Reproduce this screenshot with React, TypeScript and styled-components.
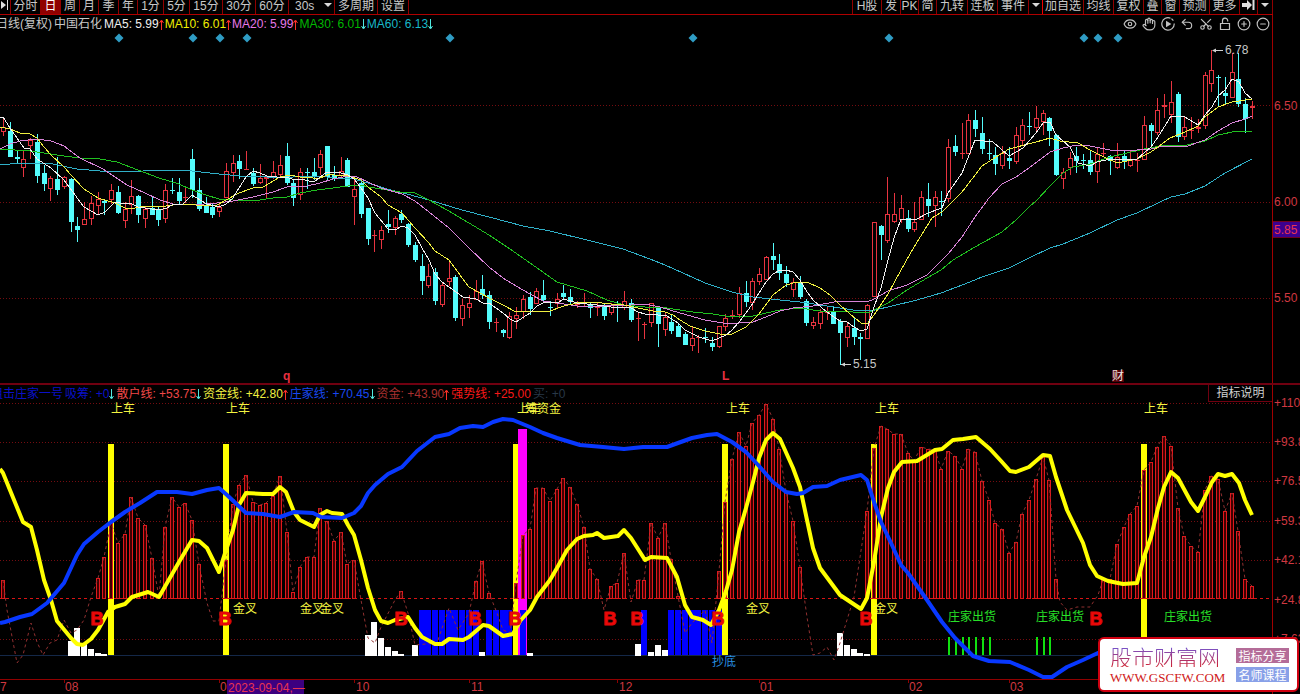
import React from "react";
import styled, { createGlobalStyle } from "styled-components";
import { Eye, Hand, Undo2, Scissors, CirclePlus, CircleMinus } from "lucide-react";

const GlobalStyle = createGlobalStyle`
  * { box-sizing: border-box; }
  body {
    margin: 0;
    background: #000;
    color: #c8c8c8;
    font: 12px/12px "Liberation Sans", "Noto Sans CJK SC", sans-serif;
    overflow-x: hidden;
  }
`;

const Page = styled.main`
  background: #000;
  width: 100%;
`;

const Toolbar = styled.nav`
  display: flex;
  justify-content: space-between;
  height: 15px;
  margin-right: 27px;
  border-bottom: 1px solid #b00000;
`;

const ToolGroup = styled.div`
  display: flex;
`;

const ToolButton = styled.button<{ $w: number; $active?: boolean; $strong?: boolean }>`
  width: ${(p) => p.$w}px;
  height: 14px;
  padding: 0;
  border: 0;
  border-right: 1px solid ${(p) => (p.$strong ? "#f00000" : "#900000")};
  background: ${(p) => (p.$active ? "#900000" : "transparent")};
  color: ${(p) => (p.$active ? "#ffffff" : "#c8c8c8")};
  font: inherit;
  line-height: 12px;
  display: flex;
  justify-content: center;
  align-items: flex-start;
  white-space: nowrap;
`;

const PeriodField = styled.label`
  position: relative;
  display: flex;
  width: 46px;
  height: 14px;
  border-right: 1px solid #900000;

  svg {
    position: absolute;
    right: 2px;
    top: 3px;
    pointer-events: none;
  }
`;

const PeriodSelect = styled.select`
  appearance: none;
  width: 100%;
  height: 12px;
  padding: 0 0 0 6px;
  border: 0;
  background: transparent;
  color: #c8c8c8;
  font: inherit;
  line-height: 12px;
`;

const Header = styled.header<{ $h: number }>`
  display: flex;
  justify-content: space-between;
  align-items: center;
  height: ${(p) => p.$h}px;
  margin-right: 27px;
  border-right: 1px solid #a00000;
`;

const Readouts = styled.div<{ $shift: number }>`
  display: flex;
  gap: 2px;
  margin-left: -${(p) => p.$shift}px;
  white-space: nowrap;
`;

const Readout = styled.span<{ $c: string }>`
  color: ${(p) => p.$c};
`;

const MaGroup = styled.div`
  display: flex;
  gap: 1px;
`;

const Arrow = styled.svg`
  display: inline-block;
  vertical-align: -2px;
`;

const IconBar = styled.div`
  display: flex;
  gap: 5px;
  padding-right: 2px;
`;

const IconButton = styled.button`
  display: flex;
  width: 14px;
  height: 14px;
  padding: 0;
  border: 0;
  background: transparent;
  color: #c0c0c0;
`;

const Chart = styled.svg`
  display: block;
  width: 100%;
  height: auto;
  overflow: visible;
`;

const SubPanel = styled.section`
  border-top: 2px solid #700010;
`;

const NoteButton = styled.button`
  width: 64px;
  height: 17px;
  padding: 0;
  border: 1px solid #700010;
  border-top: 0;
  border-right: 0;
  background: #000;
  color: #d0d0d0;
  font: inherit;
`;

const Brand = styled.aside`
  position: absolute;
  right: 1px;
  top: 637px;
  display: flex;
  align-items: center;
  justify-content: space-between;
  width: 201px;
  height: 55px;
  padding: 0 8px 0 10px;
  border: 2px solid #d00010;
  border-radius: 6px;
  background: #fff;
`;

const BrandText = styled.div`
  display: flex;
  flex-direction: column;
  gap: 4px;
`;

const BrandName = styled.strong`
  font: 300 22px/22px "Noto Sans CJK SC", sans-serif;
  background: linear-gradient(#6a5ae0, #d02030);
  background-clip: text;
  -webkit-background-clip: text;
  color: transparent;
  white-space: nowrap;
`;

const BrandUrl = styled.a`
  font: 13px/14px "Liberation Serif", serif;
  color: #d02020;
  text-decoration: none;
`;

const BrandTags = styled.div`
  display: flex;
  flex-direction: column;
  gap: 4px;
`;

const BrandTag = styled.span<{ $bg: string }>`
  background: ${(p) => p.$bg};
  color: #fff;
  font: 12px/15px "Noto Sans CJK SC", sans-serif;
  height: 15px;
  width: 53px;
  text-align: center;
  white-space: nowrap;
`;

const xAt = (i: number) => Math.round(3 + 6.75 * i);

/* wick top, body top, body bottom, wick bottom; rising candles carry "u", falling "d" */
const CANDLES = `
u117,127,131,136 d122,131,157,157 d150,157,159,163 u150,159,167,177 u138,140,145,159 d134,142,176,183 d165,173,184,191
u176,178,188,201 d157,179,190,195 u176,177,186,189 d178,179,222,232 d217,226,230,242 u202,219,224,224 u196,203,218,225
u192,199,205,215 d200,201,203,215 u184,190,199,204 d186,192,213,214 u202,209,220,228 u180,196,204,214 d195,196,215,223
u207,209,218,228 d197,208,215,215 d207,210,220,226 u184,190,218,223 d178,190,191,194 d178,192,201,204 u187,197,198,203
d149,159,190,198 d178,190,209,211 d197,206,213,213 d203,207,215,218 u204,207,211,217 u163,171,197,198 u155,163,172,182
d155,161,169,179 u151,169,170,170 d168,173,184,186 u164,178,182,184 u175,177,179,199 u161,172,177,179 u155,165,174,177
d143,156,183,185 d180,183,198,206 u168,172,194,200 d168,172,173,189 d158,172,177,180 u150,154,167,175 d146,146,177,180
d166,175,179,181 u157,171,175,177 d158,160,187,187 u180,189,196,225 d182,183,214,218 d208,208,239,245 u230,235,236,252
u226,230,239,249 d210,224,227,233 u216,218,227,235 d210,214,220,223 d223,224,245,247 d242,245,260,262 d254,266,281,295
u264,276,285,288 d268,272,301,305 u283,285,304,307 u262,278,281,286 d275,277,318,321 u299,305,318,326 u295,303,307,318
u280,291,299,299 d275,289,295,299 d291,295,322,329 u318,322,323,332 d329,330,333,337 u312,316,337,339 u307,315,318,329
u295,299,311,319 d292,297,309,315 u288,291,303,304 d280,295,300,301 d301,307,308,316 u293,299,303,308 d285,293,297,300
d289,297,302,304 u301,303,305,308 u293,302,304,307 d302,305,308,318 u302,307,308,316 d303,305,316,320 u303,305,312,315
d301,307,308,322 u291,301,307,310 d299,303,320,322 u313,318,319,341 u322,324,325,339 u303,303,322,327 d306,307,324,347
u313,317,329,336 d315,322,331,334 d323,326,337,337 d332,334,345,345 u327,338,345,351 u335,337,338,353 d328,337,338,343
d337,343,347,351 u326,326,346,348 u314,318,326,331 u310,315,316,319 u287,293,314,318 d281,293,302,307 u278,281,302,310
u268,274,281,285 u256,257,279,280 d243,256,260,270 d254,264,273,280 d266,274,283,287 u278,282,289,297 d276,283,297,299
d299,301,323,326 u317,322,325,329 u309,312,323,329 u306,312,313,320 d307,312,324,324 d319,321,333,365 u322,326,337,347
d318,328,337,345 d333,337,339,360 u304,305,338,339 u222,222,296,297 d225,226,235,260 u177,214,240,243 u193,214,221,223
u195,208,219,223 d210,218,229,232 u202,222,229,232 u191,197,219,220 d183,199,206,217 u191,197,205,227 d191,201,202,216
u139,147,198,202 d135,146,152,156 u123,153,154,159 u114,120,153,154 d110,120,129,137 d117,133,149,154 d139,153,154,160
d147,155,164,175 u146,153,165,169 d147,158,161,169 u127,135,161,164 u119,125,140,145 d112,126,127,135 u106,118,127,133
u110,113,121,135 d117,118,131,146 d134,135,175,176 u168,172,178,189 u152,158,167,175 d147,156,161,173 d154,160,161,169
d151,160,172,175 u147,154,171,183 u143,153,154,156 d155,156,161,175 u143,157,167,169 d150,156,161,169 u151,160,165,167
u153,160,161,172 u116,125,159,160 d123,125,131,147 u98,110,132,135 u94,105,107,118 u81,102,114,123 d92,94,137,142
u117,127,136,140 u117,130,131,139 u119,127,129,133 u72,75,125,129 u50,70,83,92 d75,77,78,107 d77,93,96,104
u53,72,97,98 d53,79,104,107 d98,104,119,133 u101,106,108,119`
  .trim()
  .split(/\s+/)
  .map((s) => ({ up: s[0] === "u", v: s.slice(1).split(",").map(Number) }));

const AVERAGES = [
  {
    color: "#30b0c8",
    points:
      "0,165 20,163 37,163 53,164 77,169 100,171 127,172 160,170 192,171 219,174 240,176 267,177 293,177 320,176 340,179 350,178 368,183 387,189 407,194 429,200 462,210 489,217 523,226 550,231 587,240 623,249 650,259 665,265 683,273 705,283 732,292 753,297 780,300 800,302 827,306 853,310 870,311 888,307 917,300 941,293 970,282 982,277 1009,268 1029,258 1050,248 1063,244 1090,233 1117,220 1137,213 1160,202 1171,197 1185,194 1205,186 1225,173 1252,159",
  },
  {
    color: "#20c020",
    points:
      "0,149 30,151 44,153 64,156 80,158 100,159 117,162 138,170 159,178 179,184 192,190 206,195 219,199 233,200 260,200 273,198 287,197 300,193 317,190 333,188 348,186 361,185 368,187 381,189 400,192 415,193 429,200 447,210 469,223 489,235 510,249 530,263 557,282 587,291 607,300 624,305 645,307 660,307 673,309 693,312 713,314 732,317 753,316 766,313 780,310 800,308 820,311 840,311 853,312 870,312 888,303 907,290 927,278 941,270 953,260 975,247 1002,232 1016,220 1029,207 1037,200 1050,186 1063,173 1073,167 1090,164 1110,157 1127,153 1144,149 1167,145 1187,145 1205,141 1218,135 1237,131 1252,132",
  },
  {
    color: "#d884d8",
    points:
      "0,149 10,144 20,141 37,139 51,141 64,146 80,158 103,169 127,185 145,193 160,200 173,204 192,205 217,203 233,201 253,197 273,192 287,187 307,186 320,183 333,179 348,176 357,177 368,182 381,188 402,194 415,201 429,212 449,228 469,248 489,267 503,278 516,286 530,294 543,301 564,304 577,306 597,307 610,305 631,305 645,304 660,307 680,313 705,320 723,323 739,323 753,322 766,317 780,311 793,308 813,306 834,302 847,301 867,302 874,299 888,291 907,285 927,275 935,267 948,254 962,237 975,217 989,198 1002,184 1016,177 1029,168 1050,152 1063,148 1077,145 1090,146 1110,150 1137,150 1151,149 1163,146 1185,147 1205,140 1218,131 1232,123 1245,119 1252,116",
  },
  {
    color: "#f0f040",
    points:
      "0,127 10,129 20,133 30,134 37,138 44,147 51,155 64,167 71,175 84,189 98,198 115,203 125,208 135,208 145,206 160,207 179,204 192,204 200,206 217,205 226,200 239,193 253,188 263,187 280,177 290,175 300,177 313,178 320,178 330,174 334,175 348,176 361,180 368,187 381,197 388,205 402,213 415,228 429,243 435,251 449,260 460,275 469,287 480,293 489,298 503,305 516,312 530,311 550,311 564,306 577,303 593,302 611,304 624,305 638,308 653,311 665,312 673,315 680,320 690,326 705,331 720,334 732,334 746,327 759,314 773,295 786,285 797,282 807,282 820,288 830,295 840,305 850,314 861,323 868,323 874,315 888,294 901,270 914,247 932,218 942,212 962,192 982,166 996,157 1009,149 1036,142 1050,138 1060,141 1078,143 1090,150 1104,157 1117,163 1137,159 1151,152 1170,138 1185,132 1198,126 1205,117 1218,107 1232,102 1252,99",
  },
  {
    color: "#f0f0f0",
    points:
      "0,117 3,117 10,128 24,148 30,149 37,159 51,168 64,180 78,199 84,207 98,215 105,212 115,202 120,203 132,204 138,207 159,210 167,208 172,205 183,204 192,195 200,200 207,204 219,207 226,204 233,198 239,188 246,177 253,171 260,173 267,176 277,177 287,177 294,180 300,179 314,182 320,177 327,172 334,172 341,173 348,175 354,179 361,188 368,198 375,213 388,229 395,230 402,226 408,228 415,235 422,248 429,260 435,274 442,282 456,292 463,297 476,299 483,303 489,303 503,313 510,319 516,322 530,313 537,306 543,303 550,302 557,303 564,299 577,303 597,305 611,307 624,307 631,308 638,312 645,314 658,315 667,316 678,323 685,330 699,337 712,341 726,335 732,330 739,322 746,313 753,303 759,293 766,282 773,274 780,270 786,270 793,272 800,280 807,292 813,300 822,308 827,312 834,317 840,321 847,322 854,327 861,331 867,329 874,307 881,288 888,260 894,238 901,219 915,220 928,213 942,208 948,193 962,173 975,140 993,142 1009,156 1023,148 1036,133 1043,123 1050,122 1056,135 1070,147 1078,163 1090,166 1097,162 1110,159 1137,159 1151,147 1158,137 1171,116 1185,117 1198,125 1205,115 1212,107 1218,96 1225,90 1232,79 1239,82 1245,93 1252,99",
  },
];

const DIAMONDS = [119, 193, 220, 247, 450, 693, 889, 1084, 1098, 1118];

/* runs of consecutive bars: first index, then the top of every bar */
const BAR_RUNS: [number, number[]][] = [
  [0, [580]],
  [14, [578, 557, 523, 543, 534, 497, 518, 525, 558]],
  [24, [527, 497, 507, 503, 520, 564]],
  [33, [560, 504, 485, 475, 502, 505, 503, 496, 476, 532, 592, 567, 557, 557, 508, 521, 541, 532, 564, 560]],
  [59, [591]],
  [70, [581, 561, 593]],
  [76, [583, 535, 529, 488, 488, 501, 489, 478, 487, 504, 527, 569, 579]],
  [90, [586, 583, 553]],
  [94, [580, 580, 523, 538, 523, 559, 596]],
  [106, [571, 502, 459, 432, 446, 423, 415, 404, 419, 449, 491, 521, 567]],
  [128, [511, 448, 426, 429, 434, 434, 453, 461, 447, 449, 450, 469, 451, 456, 469, 449, 452, 481, 500, 523, 529, 553, 542, 514, 500, 479, 457, 480, 579]],
  [163, [580, 579, 544, 527, 514, 506, 470, 462, 447, 436, 446, 508, 536, 546, 552, 490, 476, 479, 511, 493, 531, 579, 586]],
];

/* dips of the retail line between two runs of bars */
const DIPS: string[] = [
  "7,610 17,663 23,655 31,623 37,642 43,655 50,643 57,640 64,620 71,633 77,630 84,620 91,597",
  "159,597",
  "207,603 213,621 219,621",
  "361,600 368,638 375,643 381,627 395,600",
  "408,613 415,645 437,643 449,608 458,630 469,613",
  "497,613 503,630 510,633",
  "604,610",
  "631,602",
  "685,633 692,623 705,610 712,643",
  "807,617 813,655 820,653 827,647 834,660 840,643 854,597",
  "1060,602 1067,610 1077,607 1090,607 1098,595",
];

const RETAIL_LINE = BAR_RUNS.map(
  ([start, tops], r) => tops.map((t, k) => `${xAt(start + k)},${t}`).join(" ") + " " + (DIPS[r] ?? "")
).join(" ");

const WHITE_BARS: [number, number][] = [
  [10, 641], [11, 628], [12, 643], [13, 649], [14, 653], [15, 654],
  [54, 635], [55, 622], [56, 638], [57, 647], [58, 651], [59, 654], [61, 645],
  [71, 652], [78, 653], [94, 644], [96, 652], [97, 645], [98, 650],
  [124, 633], [125, 645], [126, 649], [127, 653], [128, 654],
];

const BLUE_BARS = [62, 63, 64, 65, 66, 67, 68, 69, 70, 72, 73, 74, 75, 77, 95, 99, 100, 101, 102, 103, 104, 105, 106];

const PILLARS = [16, 33, 76, 107, 129, 169];
const GREEN_STICKS = [140, 141, 142, 143, 144, 145, 146, 153, 154, 155];

const FUND_LINE =
  "0,469 3,473 23,522 31,527 37,550 44,580 51,600 57,621 71,638 77,644 83,645 91,639 98,630 108,612 115,607 125,604 132,597 148,592 159,597 167,583 179,562 192,540 199,541 207,548 219,572 226,550 233,530 239,505 246,493 263,494 273,494 280,487 286,492 294,512 300,520 314,527 320,515 327,511 332,513 342,514 348,525 354,535 361,560 368,588 375,610 381,621 388,623 395,620 408,617 415,628 422,637 435,644 442,644 449,639 463,640 469,637 483,625 489,626 503,636 513,634 520,621 530,610 537,597 550,580 557,568 567,550 577,539 584,536 593,535 597,533 604,538 618,536 624,530 631,538 645,560 651,557 667,558 677,577 685,605 692,617 703,620 711,625 719,610 726,591 732,570 739,532 746,508 753,482 759,458 766,440 773,433 780,439 793,468 800,487 807,520 813,548 820,568 840,595 861,609 867,598 874,562 881,517 888,488 894,472 902,462 917,461 935,450 942,449 953,440 963,439 976,437 990,449 1002,462 1010,471 1016,472 1029,467 1043,455 1050,456 1056,477 1067,510 1083,543 1090,565 1097,576 1108,581 1123,584 1137,583 1144,557 1151,537 1158,508 1164,487 1171,472 1178,478 1191,502 1198,511 1205,497 1212,482 1218,474 1225,476 1232,474 1239,483 1245,500 1252,515";

const BANKER_LINE =
  "0,623 5,622 20,617 32,614 47,603 64,583 77,555 84,544 98,532 111,522 125,512 140,503 157,492 177,492 192,494 207,490 219,488 227,495 246,513 263,514 280,517 294,512 313,513 321,517 342,518 354,513 361,506 368,493 375,485 388,474 402,467 417,451 435,437 449,434 460,428 473,426 483,427 493,422 503,419 513,420 530,427 543,433 557,438 580,445 603,447 624,449 643,447 667,447 678,443 692,438 707,435 717,434 732,442 746,452 759,466 773,482 786,492 797,494 803,493 813,487 827,486 840,480 861,475 867,480 874,502 881,522 891,543 901,565 908,573 927,600 942,622 955,638 973,656 989,661 1010,662 1029,670 1043,677 1052,677 1067,667 1083,660 1100,652";

const YELLOW_NOTES: [number, number, string][] = [
  [111, 413, "上车"], [226, 413, "上车"], [517, 413, "上车"], [525, 413, "筹资金"], [726, 413, "上车"], [875, 413, "上车"], [1144, 413, "上车"],
  [233, 613, "金叉"], [300, 613, "金叉"], [320, 613, "金叉"], [746, 613, "金叉"], [874, 613, "金叉"],
];

const GREEN_NOTES = [948, 1036, 1164];
const BUY_MARKS = [97, 225, 401, 475, 515, 610, 637, 718, 866, 1096];

const LEVELS: [number, string][] = [
  [403, "+110"], [442, "+93.8"], [481, "+76.5"], [521, "+59.3"], [560, "+42.1"], [600, "+24.8"], [639, "+7.63"],
];

const MONTHS: [number, number, string][] = [
  [-10, 0, "7"], [64, 65, "08"], [219, 220, "09"], [354, 356, "10"], [469, 471, "11"], [617, 619, "12"],
  [759, 760, "01"], [908, 909, "02"], [1009, 1010, "03"],
];

const PERIODS: [string, number][] = [
  ["周", 19], ["月", 19], ["季", 20], ["年", 19], ["1分", 26], ["5分", 26], ["15分", 33], ["30分", 33], ["60分", 33],
];

const ACTIONS_A: [string, number][] = [
  ["H股", 29], ["发", 19], ["PK", 18], ["简", 18], ["九转", 31], ["连板", 30], ["事件", 31],
];

const ACTIONS_B: [string, number][] = [
  ["加自选", 41], ["均线", 30], ["复权", 30], ["叠", 18], ["窗", 18], ["预测", 30], ["更多", 30],
];

const Caret = () => (
  <svg width="8" height="5" viewBox="0 0 8 5" aria-hidden="true">
    <path d="M0 0H8L4 4Z" fill="#d8d8d8" />
  </svg>
);

const CaretButton = ({ w, label, strong }: { w: number; label: string; strong?: boolean }) => (
  <ToolButton $w={w} $strong={strong} aria-label={label}>
    <svg width="8" height="8" viewBox="0 0 8 8" aria-hidden="true">
      <path d="M0 3H8L4 7Z" fill="#d8d8d8" />
    </svg>
  </ToolButton>
);

const Trend = ({ up }: { up?: boolean }) => (
  <Arrow width="5" height="11" viewBox="0 0 5 11" aria-hidden="true">
    {up ? (
      <path d="M2.5 11V2M.5 4L2.5 1L4.5 4" stroke="#ff3028" fill="none" />
    ) : (
      <path d="M2.5 0V9M.5 7L2.5 10L4.5 7" stroke="#50e8e0" fill="none" />
    )}
  </Arrow>
);

const TopToolbar = () => (
  <Toolbar aria-label="周期">
    <ToolGroup>
      <ToolButton $w={11} aria-label="上一个">
        <svg width="9" height="11" viewBox="0 0 9 11" aria-hidden="true">
          <path d="M0 1L5 5L0 9Z" fill="#e0e0e0" />
          <path d="M6.5 0V10" stroke="#e0e0e0" />
        </svg>
      </ToolButton>
      <ToolButton $w={30}>分时</ToolButton>
      <ToolButton $w={20} $active>日</ToolButton>
      {PERIODS.map(([t, w]) => (
        <ToolButton key={t} $w={w}>{t}</ToolButton>
      ))}
      <PeriodField>
        <PeriodSelect aria-label="秒周期" defaultValue="30s">
          <option>30s</option>
        </PeriodSelect>
        <Caret />
      </PeriodField>
      <ToolButton $w={43}>多周期</ToolButton>
      <ToolButton $w={31}>设置</ToolButton>
    </ToolGroup>
    <ToolGroup>
      <ToolButton $w={1} aria-hidden="true" tabIndex={-1} />
      {ACTIONS_A.map(([t, w]) => (
        <ToolButton key={t} $w={w}>{t}</ToolButton>
      ))}
      <CaretButton w={14} label="更多事件" strong />
      {ACTIONS_B.map(([t, w]) => (
        <ToolButton key={t} $w={w}>{t}</ToolButton>
      ))}
      <ToolButton $w={18} aria-label="下一个">
        <svg width="13" height="11" viewBox="0 0 13 11" aria-hidden="true">
          <path d="M0 3H5V0L10 5L5 10V7H0Z" fill="#e0e0e0" />
          <path d="M11.5 0V10" stroke="#e0e0e0" strokeWidth="2" />
        </svg>
      </ToolButton>
      <CaretButton w={15} label="展开" />
    </ToolGroup>
  </Toolbar>
);

const PriceHeader = () => (
  <Header $h={18}>
    <Readouts $shift={4}>
      <Readout $c="#c8c8c8">日线(复权)</Readout>
      <Readout $c="#c8c8c8">中国石化</Readout>
      <MaGroup>
        <Readout $c="#f0f0f0">MA5: 5.99<Trend up /></Readout>
        <Readout $c="#f0f000">MA10: 6.01<Trend up /></Readout>
        <Readout $c="#e878e8">MA20: 5.99<Trend up /></Readout>
        <Readout $c="#00b800">MA30: 6.01<Trend /></Readout>
        <Readout $c="#18b8c8">MA60: 6.13<Trend /></Readout>
      </MaGroup>
    </Readouts>
    <IconBar>
      <IconButton aria-label="显示"><Eye size={14} strokeWidth={2} /></IconButton>
      <IconButton aria-label="拖动"><Hand size={14} strokeWidth={2} /></IconButton>
      <IconButton aria-label="回放">
        <svg width="14" height="14" viewBox="0 0 14 14" fill="none" stroke="currentColor" strokeWidth="1.2">
          <path d="M9.500 1.200A6.200 6.200 0 1 0 13.200 6.500" />
          <path d="M10.500 1.700L12.400 3.600" />
          <path d="M5 3.800L10.400 7L5 10.200Z" fill="currentColor" stroke="none" />
        </svg>
      </IconButton>
      <IconButton aria-label="撤销"><Undo2 size={14} strokeWidth={2} /></IconButton>
      <IconButton aria-label="剪切">
        <Scissors size={14} strokeWidth={2} transform="rotate(-90)" />
      </IconButton>
      <IconButton aria-label="锁定">
        <svg width="14" height="14" viewBox="0 0 14 14" fill="none" stroke="currentColor" strokeWidth="1.2">
          <path d="M2.500 6.500H11.500V12.500H2.500Z" />
          <path d="M4.500 6.500V4A2.600 2.600 0 0 1 9.700 3.500V4.500" />
        </svg>
      </IconButton>
      <IconButton aria-label="放大"><CirclePlus size={14} strokeWidth={2} /></IconButton>
      <IconButton aria-label="缩小"><CircleMinus size={14} strokeWidth={2} /></IconButton>
    </IconBar>
  </Header>
);

const GridLine = ({ y }: { y: number }) => (
  <line x1="0" x2="1272" y1={y + 0.5} y2={y + 0.5} stroke="#740c10" strokeDasharray="1 2" shapeRendering="crispEdges" />
);

const PriceChart = () => (
  <Chart viewBox="0 33 1300 350" fontSize="12" role="img" aria-label="K线图">
    {[105, 202, 298].map((y) => <GridLine key={y} y={y} />)}
    <line x1="1272.5" x2="1272.5" y1="33" y2="383" stroke="#a00000" />
    {DIAMONDS.map((x) => (
      <path key={x} d={`M${x} 33.5L${x + 4.5} 38L${x} 42.5L${x - 4.5} 38Z`} fill="#2f9cc4" />
    ))}
    <g shapeRendering="crispEdges">
      {CANDLES.map(({ up, v: [wt, bt, bb, wb] }, i) => {
        const x = xAt(i);
        const h = bb - bt;
        if (!up)
          return (
            <g key={i} fill="#54fcfc">
              <rect x={x} y={wt} width="1" height={wb - wt} />
              <rect x={x - 2} y={bt} width="5" height={Math.max(h, 1)} />
            </g>
          );
        return (
          <g key={i} fill="#e83440">
            <rect x={x} y={wt} width="1" height={bt - wt} />
            <rect x={x} y={bb} width="1" height={wb - bb} />
            {h > 2 ? (
              <rect x={x - 1.5} y={bt + 0.5} width="4" height={h} fill="#000" stroke="#e83440" />
            ) : (
              <rect x={x - 2} y={bt} width="5" height={h} />
            )}
          </g>
        );
      })}
    </g>
    {AVERAGES.map((a) => (
      <polyline key={a.color} points={a.points} fill="none" stroke={a.color} shapeRendering="crispEdges" />
    ))}
    <g stroke="#d0d0d0" fill="#d0d0d0">
      <path d="M1213 50.5H1223M841 364.5H851" />
      <path d="M1212 50.5L1216 48.5V52.5ZM841 364.5L845 362.5V366.5Z" stroke="none" />
    </g>
    <text x="1225" y="54" fill="#c8c8c8">6.78</text>
    <text x="853" y="368" fill="#c8c8c8">5.15</text>
    <g fontWeight="bold" fill="#e83040">
      <text x="283" y="380">q</text>
      <text x="722" y="380">L</text>
    </g>
    <rect x="1112" y="370" width="12" height="12" fill="#500008" />
    <text x="1112" y="380" fill="#f0e0e0">财</text>
    <g fill="#d03840">
      <text x="1274" y="110">6.50</text>
      <text x="1274" y="206">6.00</text>
      <text x="1274" y="302">5.50</text>
    </g>
    <rect x="1273" y="221" width="27" height="17" fill="#3c0090" />
    <path d="M1273 221.5H1300M1273 237.5H1300" stroke="#700020" />
    <text x="1274" y="234" fill="#e83450">5.85</text>
  </Chart>
);

const IndicatorHeader = () => (
  <Header $h={17}>
    <Readouts $shift={9}>
      <Readout $c="#0a10c8">狙击庄家一号</Readout>
      <Readout $c="#0a10c8">吸筹: +0<Trend /></Readout>
      <Readout $c="#f04848">散户线: +53.75<Trend /></Readout>
      <Readout $c="#f0f040">资金线: +42.80<Trend up /></Readout>
      <Readout $c="#1848f0">庄家线: +70.45<Trend /></Readout>
      <Readout $c="#a83030">资金: +43.90<Trend up /></Readout>
      <Readout $c="#f81818">强势线: +25.00</Readout>
      <Readout $c="#283848">买: +0</Readout>
    </Readouts>
    <NoteButton>指标说明</NoteButton>
  </Header>
);

const IndicatorChart = () => (
  <Chart viewBox="0 402 1300 292" fontSize="12" role="img" aria-label="指标图">
    {[403, 442, 481, 521, 560, 639].map((y) => <GridLine key={y} y={y} />)}
    <line x1="1272.5" x2="1272.5" y1="402" y2="694" stroke="#a00000" />
    <line x1="0" x2="1272" y1="655.5" y2="655.5" stroke="#142848" />
    <line x1="0" x2="1272" y1="679.5" y2="679.5" stroke="#900000" />
    <g shapeRendering="crispEdges">
      {PILLARS.map((i) => (
        <rect key={i} x={xAt(i) - 3} y="444" width="6" height="211" fill="#ffff00" />
      ))}
      <rect x="518" y="429" width="9" height="226" fill="#ff00ff" />
      {BLUE_BARS.map((i) => (
        <rect key={i} x={xAt(i) - 3} y="610" width="6" height="45" fill="#0000ff" />
      ))}
      {WHITE_BARS.map(([i, t]) => (
        <rect key={i} x={xAt(i) - 3} y={t} width="6" height={656 - t} fill="#ffffff" />
      ))}
      {GREEN_STICKS.map((i) => (
        <rect key={i} x={xAt(i)} y="637" width="2" height="18" fill="#10e010" />
      ))}
      {BAR_RUNS.map(([start, tops]) =>
        tops.map((t, k) => (
          <rect key={start + k} x={xAt(start + k) - 1.5} y={t + 0.5} width="3" height={598 - t} fill="#400000" stroke="#e0181c" />
        ))
      )}
      <line x1="0" x2="1272" y1="598.5" y2="598.5" stroke="#d81414" strokeDasharray="3 3" />
    </g>
    <polyline points={RETAIL_LINE} fill="none" stroke="#903030" strokeDasharray="3 3" />
    <g fill="none" strokeWidth="4" strokeLinejoin="round">
      <polyline points={FUND_LINE} stroke="#ffff00" />
      <polyline points={BANKER_LINE} stroke="#0838ff" />
    </g>
    <g fill="#f4f440">
      {YELLOW_NOTES.map(([x, y, t]) => (
        <text key={`${x}-${y}`} x={x} y={y}>{t}</text>
      ))}
    </g>
    <g fill="#28e028">
      {GREEN_NOTES.map((x) => (
        <text key={x} x={x} y="621">庄家出货</text>
      ))}
    </g>
    <text x="712" y="666" fill="#2890e0">抄底</text>
    <g fill="#f00808" stroke="#e00808" strokeWidth="1" fontWeight="bold" fontSize="18" textAnchor="middle">
      {BUY_MARKS.map((x) => (
        <text key={x} x={x} y="625">B</text>
      ))}
    </g>
    <g fill="#d03840">
      {LEVELS.map(([y, t]) => (
        <text key={t} x="1274" y={y + 4}>{t}</text>
      ))}
      {MONTHS.map(([, x, t]) => (
        <text key={t} x={x} y="691">{t}</text>
      ))}
    </g>
    {MONTHS.map(([tick]) => (
      <line key={tick} x1={tick + 0.5} x2={tick + 0.5} y1="680" y2="683" stroke="#900000" />
    ))}
    <rect x="227" y="680" width="77" height="14" fill="#3c0080" />
    <text x="228" y="692" fill="#e83450">2023-09-04,—</text>
  </Chart>
);

const App = () => (
  <>
    <GlobalStyle />
    <Page>
      <TopToolbar />
      <PriceHeader />
      <PriceChart />
      <SubPanel>
        <IndicatorHeader />
        <IndicatorChart />
      </SubPanel>
      <Brand>
        <BrandText>
          <BrandName>股市财富网</BrandName>
          <BrandUrl href="#">WWW.GSCFW.COM</BrandUrl>
        </BrandText>
        <BrandTags>
          <BrandTag $bg="#b46c98">指标分享</BrandTag>
          <BrandTag $bg="#88a0e8">名师课程</BrandTag>
        </BrandTags>
      </Brand>
    </Page>
  </>
);

export default App;
